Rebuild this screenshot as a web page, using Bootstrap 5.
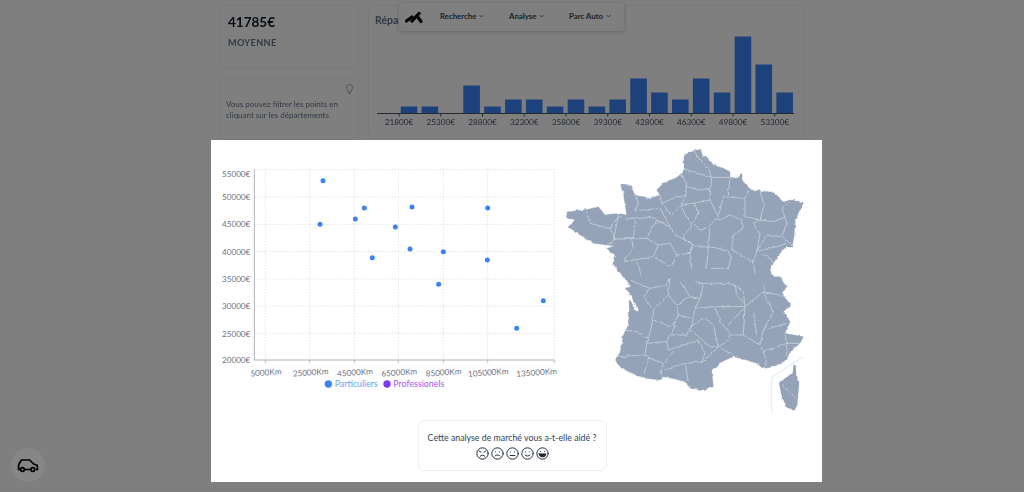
<!DOCTYPE html>
<html lang="fr">
<head>
    <meta charset="UTF-8">
    <meta name="viewport" content="width=device-width, initial-scale=1.0">
    <title>Analyse de marché</title>
    <link href="https://cdn.jsdelivr.net/npm/bootstrap@5.3.0/dist/css/bootstrap.min.css" rel="stylesheet">
    <style>
        html, body { height: 100%; overflow: hidden; }
        body { font-family: Lato, "Noto Sans", sans-serif; background: #fff; color: #1e293b; }
        .page-back { width: 584px; margin-left: 220px; padding-top: 5px; gap: 9px; filter: blur(.6px); }
        .left-col { width: 139px; gap: 10px; }
        .stat-box { border: 1px solid #f1f3f6; border-radius: 6px; background: #fff; }
        .stat-top { height: 63px; padding: 7px 7px; }
        .stat-value { font-size: 13.5px; font-weight: 700; line-height: 18px; margin-bottom: 5px; color: #0f172a; }
        .stat-label { font-size: 9.2px; font-weight: 700; line-height: 14px; color: #64748b; letter-spacing: .3px; }
        .stat-tip { height: 62px; padding: 20px 5px 0; font-size: 8px; line-height: 10.5px; color: #64748b; position: relative; }
        .tip-bulb { position: absolute; top: 5px; right: 4px; width: 9px; height: 11px; }
        .repart-box { width: 436px; height: 134px; }
        .repart-title { font-size: 10.5px; font-weight: 700; line-height: 14px; color: #64748b; margin: 7px 0 3px 6px; }
        .bar-axis text { font-size: 8.2px; fill: #475569; text-anchor: middle; }
        .top-nav { position: absolute; top: 3px; left: 399px; width: 225px; height: 28px; background: #fff; border-radius: 0 0 3px 3px; box-shadow: 0 1px 4px rgba(0,0,0,.2); z-index: 10; }
        .logo-mark { position: absolute; left: 6px; top: 7px; width: 18px; height: 13px; }
        .nav-a { font-size: 7.8px; font-weight: 700; color: #334155; text-decoration: none; position: absolute; top: 8px; line-height: 11px; white-space: nowrap; }
        .nav-a:nth-of-type(1) { left: 41px; }
        .nav-a:nth-of-type(2) { left: 110px; }
        .nav-a:nth-of-type(3) { left: 170px; }
        .nav-chev { width: 5px; height: 4px; margin-left: 3px; vertical-align: 1px; }
        .modal-pane { position: fixed; left: 211px; top: 140px; width: 611px; height: 342px; background: #fff; z-index: 1060; }
        .plot-svg { width: 349px; height: 259px; display: block; }
        .map-svg { width: 260px; height: 280px; display: block; }
        .plot-svg text { font-size: 24.5px; fill: #6b7280; }
        .plot-svg .legend-txt { font-size: 26.5px; }
        .grid-l { stroke: #d4d4d8; stroke-width: 3; stroke-dasharray: 3 6; fill: none; }
        .dept { fill: none; stroke: #d5dce6; stroke-width: 2; stroke-linejoin: round; }
        .avis-box { width: 189px; height: 51px; border: 1px solid #eceff3; border-radius: 6px; margin-left: 206.5px; text-align: center; padding-top: 10px; }
        .avis-txt { font-size: 8.8px; line-height: 13px; color: #334155; white-space: nowrap; }
        .avis-faces { gap: 2px; margin-top: 3px; }
        .avis-faces svg { width: 13px; height: 13px; }
        .car-btn { position: fixed; left: 11px; top: 448px; width: 34px; height: 34px; border-radius: 50%; background: rgba(255,255,255,.05); z-index: 1060; }
        .car-btn svg { width: 22px; height: 16px; }
    </style>
</head>
<body>

<div class="page-back d-flex">
    <div class="left-col d-flex flex-column">
        <div class="stat-box stat-top">
            <div class="stat-value">41785€</div>
            <div class="stat-label">MOYENNE</div>
        </div>
        <div class="stat-box stat-tip">
            <svg class="tip-bulb" viewBox="0 0 18 22" fill="none" stroke="#94a3b8" stroke-width="2" stroke-linecap="round"><path d="M6 15c0-3-3-4-3-8a6 6 0 0 1 12 0c0 4-3 5-3 8z"/><path d="M7 19h4"/></svg>
            Vous pouvez filtrer les points en<br>cliquant sur les départements
        </div>
    </div>
    <div class="stat-box repart-box">
        <div class="repart-title">Répartition des prix</div>
        <svg id="barChart" class="bar-axis d-block" width="434" height="100" viewBox="0 0 434 100"></svg>
    </div>
</div>

<nav class="top-nav">
    <svg class="logo-mark" viewBox="0 0 18 13" fill="none" stroke="#000" stroke-width="3.2" stroke-linecap="round"><path d="M1.500 11 7 7"/><path d="M7 11 14 3.500"/><path d="M12 6l4 5.500"/></svg>
    <a href="#" class="nav-a">Recherche<svg class="nav-chev" viewBox="0 0 10 8" fill="none" stroke="#475569" stroke-width="1.6"><path d="M1 2l4 4 4-4"/></svg></a>
    <a href="#" class="nav-a">Analyse<svg class="nav-chev" viewBox="0 0 10 8" fill="none" stroke="#475569" stroke-width="1.6"><path d="M1 2l4 4 4-4"/></svg></a>
    <a href="#" class="nav-a">Parc Auto<svg class="nav-chev" viewBox="0 0 10 8" fill="none" stroke="#475569" stroke-width="1.6"><path d="M1 2l4 4 4-4"/></svg></a>
</nav>

<button class="car-btn border-0 p-0 d-flex align-items-center justify-content-center">
    <svg viewBox="0 0 22 16" fill="none" stroke="#000" stroke-width="1.7" stroke-linejoin="round"><path d="M3.500 12.500H1.600V8L4.400 3h8.200l4 4 3.600 1.300.3 4.200h-1.800M14 12.500H7.500"/><circle cx="5.500" cy="12.500" r="1.900"/><circle cx="15.800" cy="12.500" r="1.900"/></svg>
</button>

<div class="modal-backdrop show"></div>

<div class="modal-pane">
    <div class="d-flex">
        <svg id="plot" class="plot-svg flex-shrink-0" viewBox="3 0 1047 777"></svg>
        <svg class="map-svg flex-shrink-0" viewBox="0 0 780 840">
            <defs>
                <filter id="rough" x="-5%" y="-5%" width="110%" height="110%">
                    <feTurbulence type="fractalNoise" baseFrequency=".07" numOctaves="2" seed="4"/>
                    <feDisplacementMap in="SourceGraphic" scale="9" xChannelSelector="R" yChannelSelector="G"/>
                </filter>
            </defs>
            <g filter="url(#rough)">
            <path fill="#94a3b8" stroke="#94a3b8" stroke-linejoin="round" d="M372 45 400 33 422 28 428 50 445 55 460 75 490 85 510 95 510 112 530 115 545 100 550 128 575 150 600 152 625 155 645 160 670 185 695 180 730 187 715 220 705 250 702 290 697 318 680 318 660 340 640 370 630 390 640 410 665 410 668 425 680 440 665 460 692 495 670 515 690 545 675 580 730 590 720 610 690 635 680 660 640 680 615 685 590 670 560 660 520 650 490 663 455 690 460 740 425 750 390 745 375 725 345 717 310 710 300 720 260 715 235 708 185 685 163 660 180 640 190 585 205 555 205 495 210 480 232 518 236 510 218 478 215 465 195 445 212 440 185 405 158 370 165 345 140 325 165 318 100 310 60 285 25 260 45 240 18 230 25 215 85 208 115 200 135 225 175 220 200 225 190 160 182 135 215 138 225 165 270 175 300 165 290 150 310 130 345 115 372 95Z"/>
            <path class="dept" d="M372 85 410 100 445 108 455 112M400 33 420 60 445 85 455 112M455 112 452 145 450 180 475 230M455 112 510 112 505 165M362 100 380 130 378 165 365 195M380 140 420 150 450 145M300 165 305 190 340 175 378 165M225 165 235 190 225 212 300 205 330 260M305 190 335 225 365 195 400 190 450 180M365 195 375 225 395 250 390 265M400 190 415 215 400 250 420 270 445 262 470 235M475 230 490 170 555 175 555 230 600 240M555 175 565 150M600 152 612 195 600 240 640 245 675 232 665 205 690 185M675 232 680 250 665 290 700 318M600 240 580 250 600 280 590 335M470 235 480 240 510 225 545 240 550 265 520 285 515 330 580 365 590 335 650 320 680 310M590 335 620 285 665 290M450 262 445 320 500 330 515 350M330 260 340 280 390 310 400 315 445 322M390 265 370 285 375 300 400 315M330 260 290 240 260 295 215 295M225 240 220 295 160 298 175 230 205 235 240 235 275 232 290 240M80 215 90 250 150 265 165 298 135 320M175 230 150 265M260 295 295 315 280 350 210 362 190 365 220 325 215 295M295 315 330 310 350 345 335 380M280 350 330 380M350 345 390 340 400 315M390 340 395 385M445 322 440 385M515 350 505 385 450 385M580 365 585 400M620 345 605 345M640 370 620 345M230 365 245 410"/>
            <g transform="translate(0 405)">
                <path class="dept" d="M210 15 270 40 250 65 280 105 280 130 265 190M270 40 320 30 330 10M330 10 325 60 280 105M325 60 350 90 390 65 420 70 430 30 400 15M360 20 390 65M420 70 405 100 395 155 380 180 335 180 345 140 355 120 350 90M280 135 330 155 345 140 355 120 395 130M265 190 260 205 320 200 330 180M190 165 230 170 265 190M260 205 255 240 175 245M255 240 270 245 250 300M320 200 325 225 370 210 415 195 435 235 425 265M270 250 310 265 300 295 305 305M345 225 315 260M300 295 340 275 375 265 385 320M375 265 430 260 475 215 520 240M430 130 385 160 450 215 475 215 460 150 435 130M405 100 465 95 480 140 505 170 510 195 475 215M465 95 555 95 505 150M555 95 550 50 525 30 500 25 420 25M555 95 550 180 510 180M550 180 600 210 620 255 615 275M600 210 610 165 680 145M555 95 610 50 640 110 610 165M610 50 680 65M580 100 590 180M610 230 680 205 720 205M675 175 680 205 680 245M525 30 530 60 550 80M610 30 615 50"/>
                <path fill="#94a3b8" d="M700 272 707 272 709 300 718 320 712 390 703 408 680 395 665 365 657 325 680 305 698 295Z"/>
                <path class="dept" d="M665 330 710 370"/>
            </g>
            </g>
            <path fill="none" stroke="#d5dce6" stroke-width="2" d="M730 650 635 712 635 815"/>
        </svg>
    </div>
    <div class="avis-box">
        <div class="avis-txt">Cette analyse de marché vous a-t-elle aidé ?</div>
        <div class="avis-faces d-flex justify-content-center">
            <svg viewBox="0 0 16 16" fill="none" stroke="#1f2937" stroke-width="1.2" stroke-linecap="round"><circle cx="8" cy="8" r="7"/><path d="M4.200 5.200l2 1.200M11.800 5.200l-2 1.200M5 11.500c1.500-2 4.500-2 6 0"/></svg>
            <svg viewBox="0 0 16 16" fill="none" stroke="#1f2937" stroke-width="1.2" stroke-linecap="round"><circle cx="8" cy="8" r="7"/><path d="M5.500 6h.1M10.500 6h.1M5 11c1.500-1.700 4.500-1.700 6 0"/></svg>
            <svg viewBox="0 0 16 16" fill="none" stroke="#1f2937" stroke-width="1.2" stroke-linecap="round"><circle cx="8" cy="8" r="7"/><path d="M5.500 6h.1M10.500 6h.1M5 10.500h6"/></svg>
            <svg viewBox="0 0 16 16" fill="none" stroke="#1f2937" stroke-width="1.2" stroke-linecap="round"><circle cx="8" cy="8" r="7"/><path d="M5.500 6h.1M10.500 6h.1M5 9.800c1.500 1.800 4.500 1.800 6 0"/></svg>
            <svg viewBox="0 0 16 16" fill="none" stroke="#1f2937" stroke-width="1.2" stroke-linecap="round"><circle cx="8" cy="8" r="7"/><path d="M5.500 5.500h.1M10.500 5.500h.1"/><path d="M3.800 8.500h8.400c0 5-8.400 5-8.400 0z" fill="#1f2937"/></svg>
        </div>
    </div>
</div>

<script>
    // Histogramme des prix
    const barHeights = [1, 1, 0, 4, 1, 2, 2, 1, 2, 1, 2, 5, 3, 2, 5, 3, 11, 7, 3];
    let bars = '';
    barHeights.forEach((h, i) => {
        if (h > 0) {
            bars += `<rect x="${31.7 + i * 20.87}" y="${83.5 - h * 7}" width="16.6" height="${h * 7}" fill="#3b82f6"/>`;
        }
    });
    bars += '<path d="M8 83.500H425" stroke="#475569" stroke-width="1" fill="none"/>';
    for (let i = 0; i < 10; i++) {
        const x = 30 + i * 41.75;
        bars += `<path d="M${x} 83.500v3" stroke="#475569" fill="none"/>`;
        bars += `<text x="${x}" y="95">${21800 + i * 3500}€</text>`;
    }
    document.getElementById('barChart').innerHTML = bars;

    // Nuage de points km / prix
    const gridX = [166, 299, 433, 565, 700, 833, 1033];
    const gridY = [88, 171, 253, 335, 417, 498, 580];
    const xLabels = [[168, '5000Km'], [302, '25000Km'], [435, '45000Km'], [568, '65000Km'], [701, '85000Km'], [835, '105000Km'], [980, '135000Km']];
    const yLabels = ['55000€', '50000€', '45000€', '40000€', '35000€', '30000€', '25000€', '20000€'];
    const points = [[339, 122], [330, 253], [436, 237], [463, 204], [606, 201], [556, 261], [487, 353], [600, 327], [700, 335], [686, 433], [833, 204], [832, 360], [920, 565], [1000, 482]];
    let plot = '';
    gridX.forEach(x => { plot += `<path class="grid-l" d="M${x} 88V660"/>`; });
    gridY.forEach(y => { plot += `<path class="grid-l" d="M133 ${y}H1033"/>`; });
    plot += '<path d="M133 88V660H1033" fill="none" stroke="#a1a1aa" stroke-width="2.500"/>';
    gridX.forEach(x => { plot += `<path d="M${x} 660v9" stroke="#a1a1aa" stroke-width="2" fill="none"/>`; });
    yLabels.forEach((t, i) => {
        const y = i === 0 ? 111 : i === 7 ? 670 : 180 + (i - 1) * 82;
        plot += `<text x="121" y="${y}" text-anchor="end">${t}</text>`;
    });
    xLabels.forEach(l => {
        plot += `<text x="${l[0]}" y="706" text-anchor="middle" transform="rotate(-4 ${l[0]} 700)">${l[1]}</text>`;
    });
    points.forEach(p => { plot += `<circle cx="${p[0]}" cy="${p[1]}" r="7.500" fill="#3b82f6"/>`; });
    plot += '<circle cx="355" cy="732" r="11" fill="#3b82f6"/><text class="legend-txt" x="374" y="741" style="fill:#60a5fa">Particuliers</text>';
    plot += '<circle cx="531" cy="732" r="11" fill="#7c3aed"/><text class="legend-txt" x="550" y="741" style="fill:#a855f7">Professionels</text>';
    document.getElementById('plot').innerHTML = plot;
</script>
</body>
</html>
